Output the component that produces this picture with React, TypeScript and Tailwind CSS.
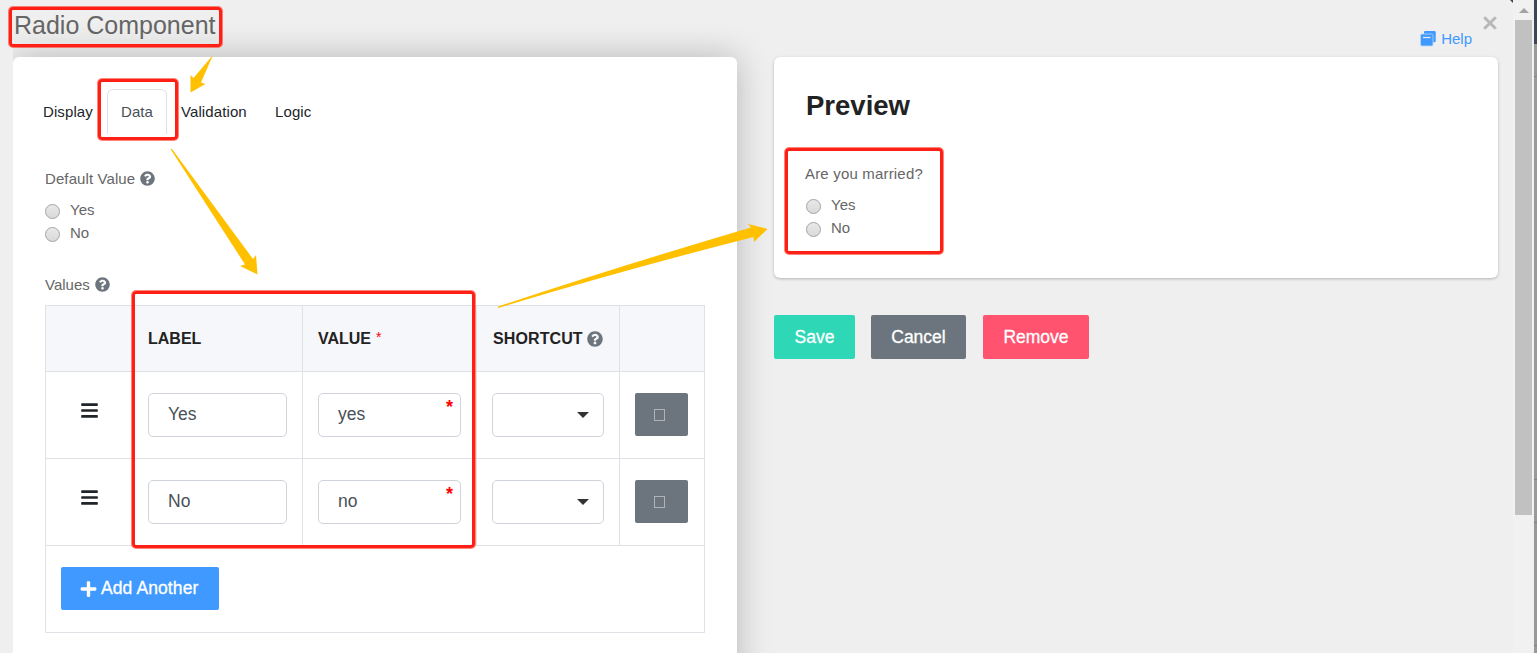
import React from "react";
import { FaQuestionCircle, FaBars, FaPlus } from "react-icons/fa";

function Radio({ label }: { label: string }) {
  return (
    <label className="flex h-[23px] items-start">
      <span className="mt-[6px] h-[15px] w-[15px] shrink-0 rounded-full border border-[#a3a3a3] bg-linear-to-b from-[#e9e9e9] to-[#d9d9d9]" />
      <span className="ml-[10px] leading-[23px]">{label}</span>
    </label>
  );
}

function Field({ text, required }: { text: string; required?: boolean }) {
  return (
    <div className="relative flex h-11 items-center rounded-[5px] border border-[#ced4da] bg-white px-[19px] pb-[2px] text-[17.5px] text-[#495057]">
      {text}
      {required && <span className="absolute top-[1px] right-[7px] text-[18px] leading-[24px] font-bold text-[#f00]">*</span>}
    </div>
  );
}

const grid = "grid grid-cols-[86px_170px_174px_143px_85px]";

function Row({ label, value }: { label: string; value: string }) {
  return (
    <div className={`${grid} h-[87px] border-b border-[#dee2e6]`}>
      <div className="flex justify-center pt-[29px]">
        <FaBars className="h-[19px] w-[17px] text-[#212529]" />
      </div>
      <div className="border-l border-[#dee2e6] px-[15px] pt-[21px]">
        <Field text={label} />
      </div>
      <div className="border-l border-[#dee2e6] px-[15px] pt-[21px]">
        <Field text={value} required />
      </div>
      <div className="border-l border-[#dee2e6] px-[15px] pt-[21px]">
        <div className="flex h-11 items-center justify-end rounded-[5px] border border-[#ced4da] bg-white pr-[14px]">
          <svg className="h-[6px] w-3" viewBox="0 0 12 6">
            <path d="M0 0H12L6 6Z" fill="#333" />
          </svg>
        </div>
      </div>
      <div className="border-l border-[#dee2e6] px-[15px] pt-[21px]">
        <div className="flex h-[43px] w-[53px] items-center rounded-[2px] bg-[#6c757d] pl-[19px]">
          <span className="mt-[1px] h-3 w-[11px] border border-[#aeb3b8]" />
        </div>
      </div>
    </div>
  );
}

function Box({ className }: { className: string }) {
  return <div className={`absolute rounded-[4px] border-[3px] border-[#ff2015] shadow-[0_0_0_1px_rgba(255,32,21,0.55)] ${className}`} />;
}

export default function App() {
  return (
    <div className="relative flex h-[653px] w-[1537px] overflow-hidden bg-[#efefef] font-['Liberation_Sans',Arial,sans-serif] text-[15px] text-[#666]">
      <main className="flex h-full w-[1513px] pl-[13px]">
        <section className="flex w-[761px] flex-col overflow-hidden">
          <h1 className="h-[57px] shrink-0 pt-[8px] pl-px text-[25px] leading-[34px]">Radio Component</h1>
          <div className="h-[680px] w-[724px] shrink-0 rounded-t-[6px] bg-white px-8 pt-8 shadow-[0_0_34px_rgba(0,0,0,0.24)]">
            <nav className="-ml-[2px] flex h-[45px] leading-[45px] tracking-[0.1px] text-[#212529]">
              <span className="w-16">Display</span>
              <span className="w-[60px] rounded-t-[6px] border border-b-0 border-[#dee2e6] text-center leading-[44px] text-[#495057]">Data</span>
              <span className="ml-[14px] w-[94px]">Validation</span>
              <span>Logic</span>
            </nav>
            <div className="mt-[33px] flex items-center gap-[5px] leading-[23px] tracking-[0.1px]">
              Default Value <FaQuestionCircle className="h-[15px] w-[15px] text-[#6c757d]" />
            </div>
            <div className="mt-[8px]">
              <Radio label="Yes" />
              <Radio label="No" />
            </div>
            <div className="mt-[29px] flex items-center gap-[5px] leading-[23px]">
              Values <FaQuestionCircle className="h-[15px] w-[15px] text-[#6c757d]" />
            </div>
            <div className="mt-[9px] w-[660px] border border-[#dee2e6]">
              <div className={`${grid} h-[66px] border-b border-[#dee2e6] bg-[#f6f7fb] text-[16px] font-bold text-[#222]`}>
                <span />
                <span className="flex items-center border-l border-[#dee2e6] pl-[15px]">LABEL</span>
                <span className="flex items-center border-l border-[#dee2e6] pl-[15px]">
                  VALUE <span className="-mt-[3px] ml-[5px] text-[14px] font-normal text-[#f00]">*</span>
                </span>
                <span className="flex items-center gap-[4px] border-l border-[#dee2e6] pl-[16px] tracking-[0.1px]">
                  SHORTCUT <FaQuestionCircle className="h-4 w-4 text-[#6c757d]" />
                </span>
                <span className="border-l border-[#dee2e6]" />
              </div>
              <Row label="Yes" value="yes" />
              <Row label="No" value="no" />
              <div className="h-[86px] pt-[21px] pl-[15px]">
                <button className="flex h-[43px] w-[158px] items-center rounded-[2px] bg-[#4099ff] pl-[19px] text-[17.5px] tracking-[0.1px] whitespace-nowrap text-white [-webkit-text-stroke:0.3px_white]">
                  <FaPlus className="mr-[4px] h-[18px] w-[17px]" />
                  Add Another
                </button>
              </div>
            </div>
          </div>
        </section>
        <section className="w-[724px]">
          <header className="flex h-[57px] justify-end pt-[28px] pr-[26px]">
            <a className="flex h-[21px] items-center gap-[5px] text-[#4099ff]">
              <svg className="h-4 w-4" viewBox="0 0 16 16">
                <path d="M5 0H14.5Q15.7 0 15.7 1.2V10Q15.7 11.2 14.5 11.2H4V1Q4 0 5 0Z" fill="#4099ff" />
                <path d="M2 3H11.5Q13 3 13 4.5V13.5Q13 15 11.5 15H2Q.5 15 .5 13.5V4.5Q.5 3 2 3Z" fill="#4099ff" stroke="#b9d8fb" strokeWidth="0.8" />
                <path d="M3 6.5H10.5" stroke="#efefef" strokeWidth="1.2" />
              </svg>
              <span className="pt-[2px]">Help</span>
            </a>
          </header>
          <div className="h-[221px] rounded-[6px] bg-white px-8 pt-[32px] shadow-[0_1px_3px_rgba(43,43,60,0.3)]">
            <h2 className="text-[27.5px] leading-[34px] font-bold text-[#222]">Preview</h2>
            <div className="-ml-px mt-[39px] leading-[23px] tracking-[0.18px]">Are you married?</div>
            <div className="mt-[8px]">
              <Radio label="Yes" />
              <Radio label="No" />
            </div>
          </div>
          <div className="mt-[37px] flex text-[17.5px] text-white [-webkit-text-stroke:0.3px_white]">
            <button className="h-11 w-[81px] rounded-[2px] bg-[#2ed8b6]">Save</button>
            <button className="ml-4 h-11 w-[95px] rounded-[2px] bg-[#6c757d]">Cancel</button>
            <button className="ml-[17px] h-11 w-[106px] rounded-[2px] bg-[#ff5370]">Remove</button>
          </div>
        </section>
      </main>
      <aside className="flex h-full w-[21px] flex-col items-center bg-[#f1f1f1]">
        <div className="flex h-5 items-center">
          <svg className="h-[5px] w-[10px]" viewBox="0 0 10 5">
            <path d="M5 0L10 5H0Z" fill="#a3a3a3" />
          </svg>
        </div>
        <div className="h-[495px] w-[17px] bg-[#c1c1c1]" />
      </aside>
      <div className="h-full w-[3px] bg-[#999]">
        <div className="h-11 bg-[#3b4657]" />
        <div className="mt-[32px] h-px bg-[#808080]" />
        <div className="mt-[402px] h-px bg-[#808080]" />
        <div className="mt-[42px] h-px bg-[#808080]" />
        <div className="mt-[122px] h-px bg-[#808080]" />
      </div>

      <svg className="absolute top-[16px] left-[1483px] h-[14px] w-[14px]" viewBox="0 0 14 14">
        <path d="M1.2 1.2L12.8 12.8M12.8 1.2L1.2 12.8" stroke="#b8b8b8" strokeWidth="3" />
      </svg>
      <svg className="absolute top-0 left-[1510px] h-[3px] w-[3px]" viewBox="0 0 3 3">
        <path d="M0 0H3V3Z" fill="#3b4657" />
      </svg>
      <Box className="top-[7px] left-[9px] h-[40px] w-[213px]" />
      <Box className="top-[79px] left-[98px] h-[61px] w-[80px]" />
      <Box className="top-[291px] left-[132px] h-[257px] w-[343px]" />
      <Box className="top-[148px] left-[785px] h-[106px] w-[158px]" />
      <svg className="pointer-events-none absolute inset-0 h-full w-full" viewBox="0 0 1537 653" fill="#ffc000">
        <path d="M213 55L201 82.5L205.5 84L190.5 92.5V75L193.5 78Z" />
        <path d="M170.5 149L172 149L253 259L256 255L257.5 274.5L240 266L245 264.5Z" />
        <path d="M498 306.5Q620 266 751 227.5L748 224L767.5 229L754 242L753.5 237Q620 271 498 308Z" />
      </svg>
    </div>
  );
}
